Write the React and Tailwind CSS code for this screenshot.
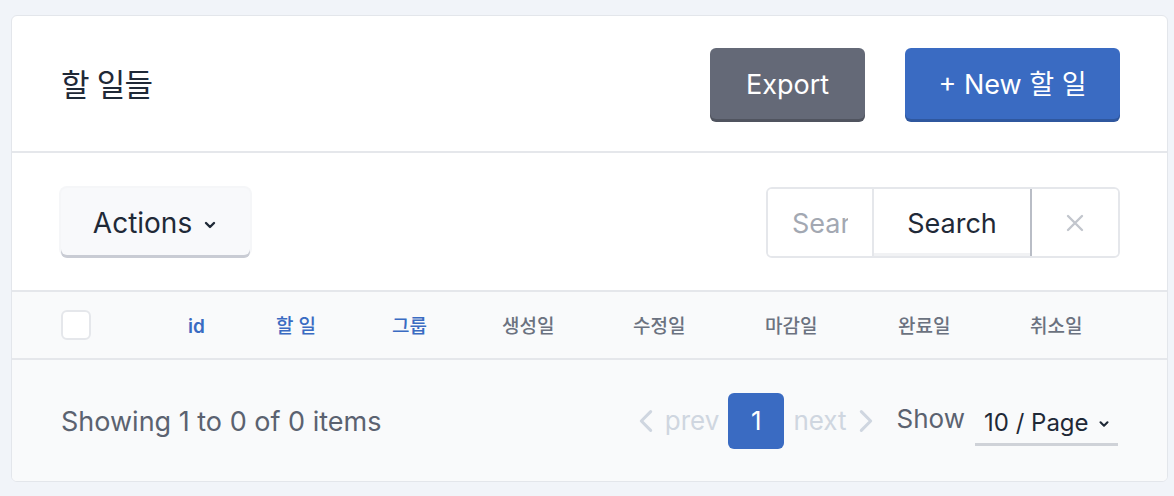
import React from 'react';

const font = { fontFamily: "Inter, 'Noto Sans CJK KR', sans-serif" };

const columns = [
  { label: 'id', sortable: true, bold: true },
  { label: '할 일', sortable: true },
  { label: '그룹', sortable: true },
  { label: '생성일' },
  { label: '수정일' },
  { label: '마감일' },
  { label: '완료일' },
  { label: '취소일' },
];

function Chevron({ className }) {
  return (
    <svg viewBox="0 0 12 12" className={className} fill="none" stroke="currentColor" strokeWidth="1.8" strokeLinecap="round" strokeLinejoin="round">
      <path d="M3 4.5 6 7.5 9 4.5" />
    </svg>
  );
}

function App() {
  return (
    <div className="min-h-screen bg-[#f1f4f9] pt-[15px] pl-[11px]" style={font}>
      <div className="w-[1157px] bg-white border border-[#e3e6eb] rounded-[6px] overflow-hidden">
        {/* header */}
        <div className="h-[137px] flex items-center justify-between pl-[49px] pr-[47px] border-b-2 border-[#e5e7eb]">
          <h1 className="text-[31px] text-[#1f2937] tracking-tight pt-[3px]">할 일들</h1>
          <div className="flex gap-[40px]">
            <button className="h-[71px] w-[155px] pt-[3px] rounded-[6px] bg-[#646977] text-white text-[27px] shadow-[0_3px_0_#50545f]">
              Export
            </button>
            <button className="h-[71px] w-[215px] pt-[3px] rounded-[6px] bg-[#3a6bc2] text-white text-[27px] shadow-[0_3px_0_#2f579e]">
              + New 할 일
            </button>
          </div>
        </div>

        {/* toolbar */}
        <div className="h-[139px] flex items-center justify-between pl-[49px] pr-[47px] border-b-2 border-[#e5e7eb]">
          <button className="h-[67px] w-[189px] pt-[3px] rounded-[6px] bg-[#f8f9fb] text-[#1f2937] text-[28px] flex items-center justify-center gap-[10px] shadow-[0_3px_0_#c9ccd4,0_0_0_2px_#f5f6f8]">
            Actions
            <Chevron className="w-[16px] h-[16px] mt-[4px]" />
          </button>
          <div className="flex h-[71px] mt-[2px] rounded-[6px] border-2 border-[#e5e7eb] overflow-hidden">
            <input
              placeholder="Search"
              className="w-[104px] px-[24px] pt-[3px] text-[27px] text-[#1f2937] placeholder:text-[#a3a8b2] outline-none bg-white"
              style={font}
            />
            <button className="w-[158px] pt-[3px] border-l-2 border-[#e5e7eb] bg-white text-[27px] text-[#1f2937] shadow-[inset_0_-3px_0_#f1f2f4]">
              Search
            </button>
            <button className="w-[88px] border-l-2 border-[#b9bdc6] bg-white text-[#c2c6cd] flex items-center justify-center">
              <svg viewBox="0 0 20 20" className="w-[20px] h-[20px]" stroke="currentColor" strokeWidth="2.4" strokeLinecap="round">
                <path d="M3 3 17 17M17 3 3 17" />
              </svg>
            </button>
          </div>
        </div>

        {/* table header */}
        <div className="h-[68px] bg-[#f9fafb] border-b-2 border-[#e5e7eb] pl-[49px] grid grid-cols-[127px_88px_116px_110px_131px_132px_133px_132px_1fr] items-center">
          <div className="w-[30px] h-[30px] rounded-[6px] border-2 border-[#e5e7eb] bg-white" />
          {columns.map(c => (
            <div
              key={c.label}
              className={`text-[19px] pt-[4px] ${c.sortable ? 'text-[#3a6bc2]' : 'text-[#6b7280]'} ${c.bold ? 'font-semibold' : 'font-medium'}`}
            >
              {c.label}
            </div>
          ))}
        </div>

        {/* footer */}
        <div className="h-[121px] bg-[#f9fafb] flex items-center justify-between pl-[49px] pr-[49px]">
          <span className="text-[27px] pt-[3px] text-[#5b6270]">Showing 1 to 0 of 0 items</span>
          <div className="flex items-center">
            <div className="flex items-center text-[26px] text-[#cfd6e0]">
              <svg viewBox="0 0 12 20" className="w-[14px] h-[24px] mr-[12px]" fill="none" stroke="currentColor" strokeWidth="2.6" strokeLinecap="round" strokeLinejoin="round">
                <path d="M10 2 2 10 10 18" />
              </svg>
              <span>prev</span>
              <span className="mx-[9px] w-[56px] h-[56px] rounded-[6px] bg-[#3a6bc2] text-white flex items-center justify-center">1</span>
              <span>next</span>
              <svg viewBox="0 0 12 20" className="w-[14px] h-[24px] ml-[12px]" fill="none" stroke="currentColor" strokeWidth="2.6" strokeLinecap="round" strokeLinejoin="round">
                <path d="M2 2 10 10 2 18" />
              </svg>
            </div>
            <span className="ml-[24px] text-[26px] text-[#5b6270] -mt-[4px]">Show</span>
            <div className="ml-[10px] h-[46px] w-[143px] pt-[3px] flex items-center gap-[8px] pl-[9px] text-[24px] text-[#1f2937] border-b-[3px] border-[#cfd2d8] mt-[4px]">
              10 / Page
              <Chevron className="w-[14px] h-[14px] mt-[3px]" />
            </div>
          </div>
        </div>
      </div>
    </div>
  );
}

export default App;
